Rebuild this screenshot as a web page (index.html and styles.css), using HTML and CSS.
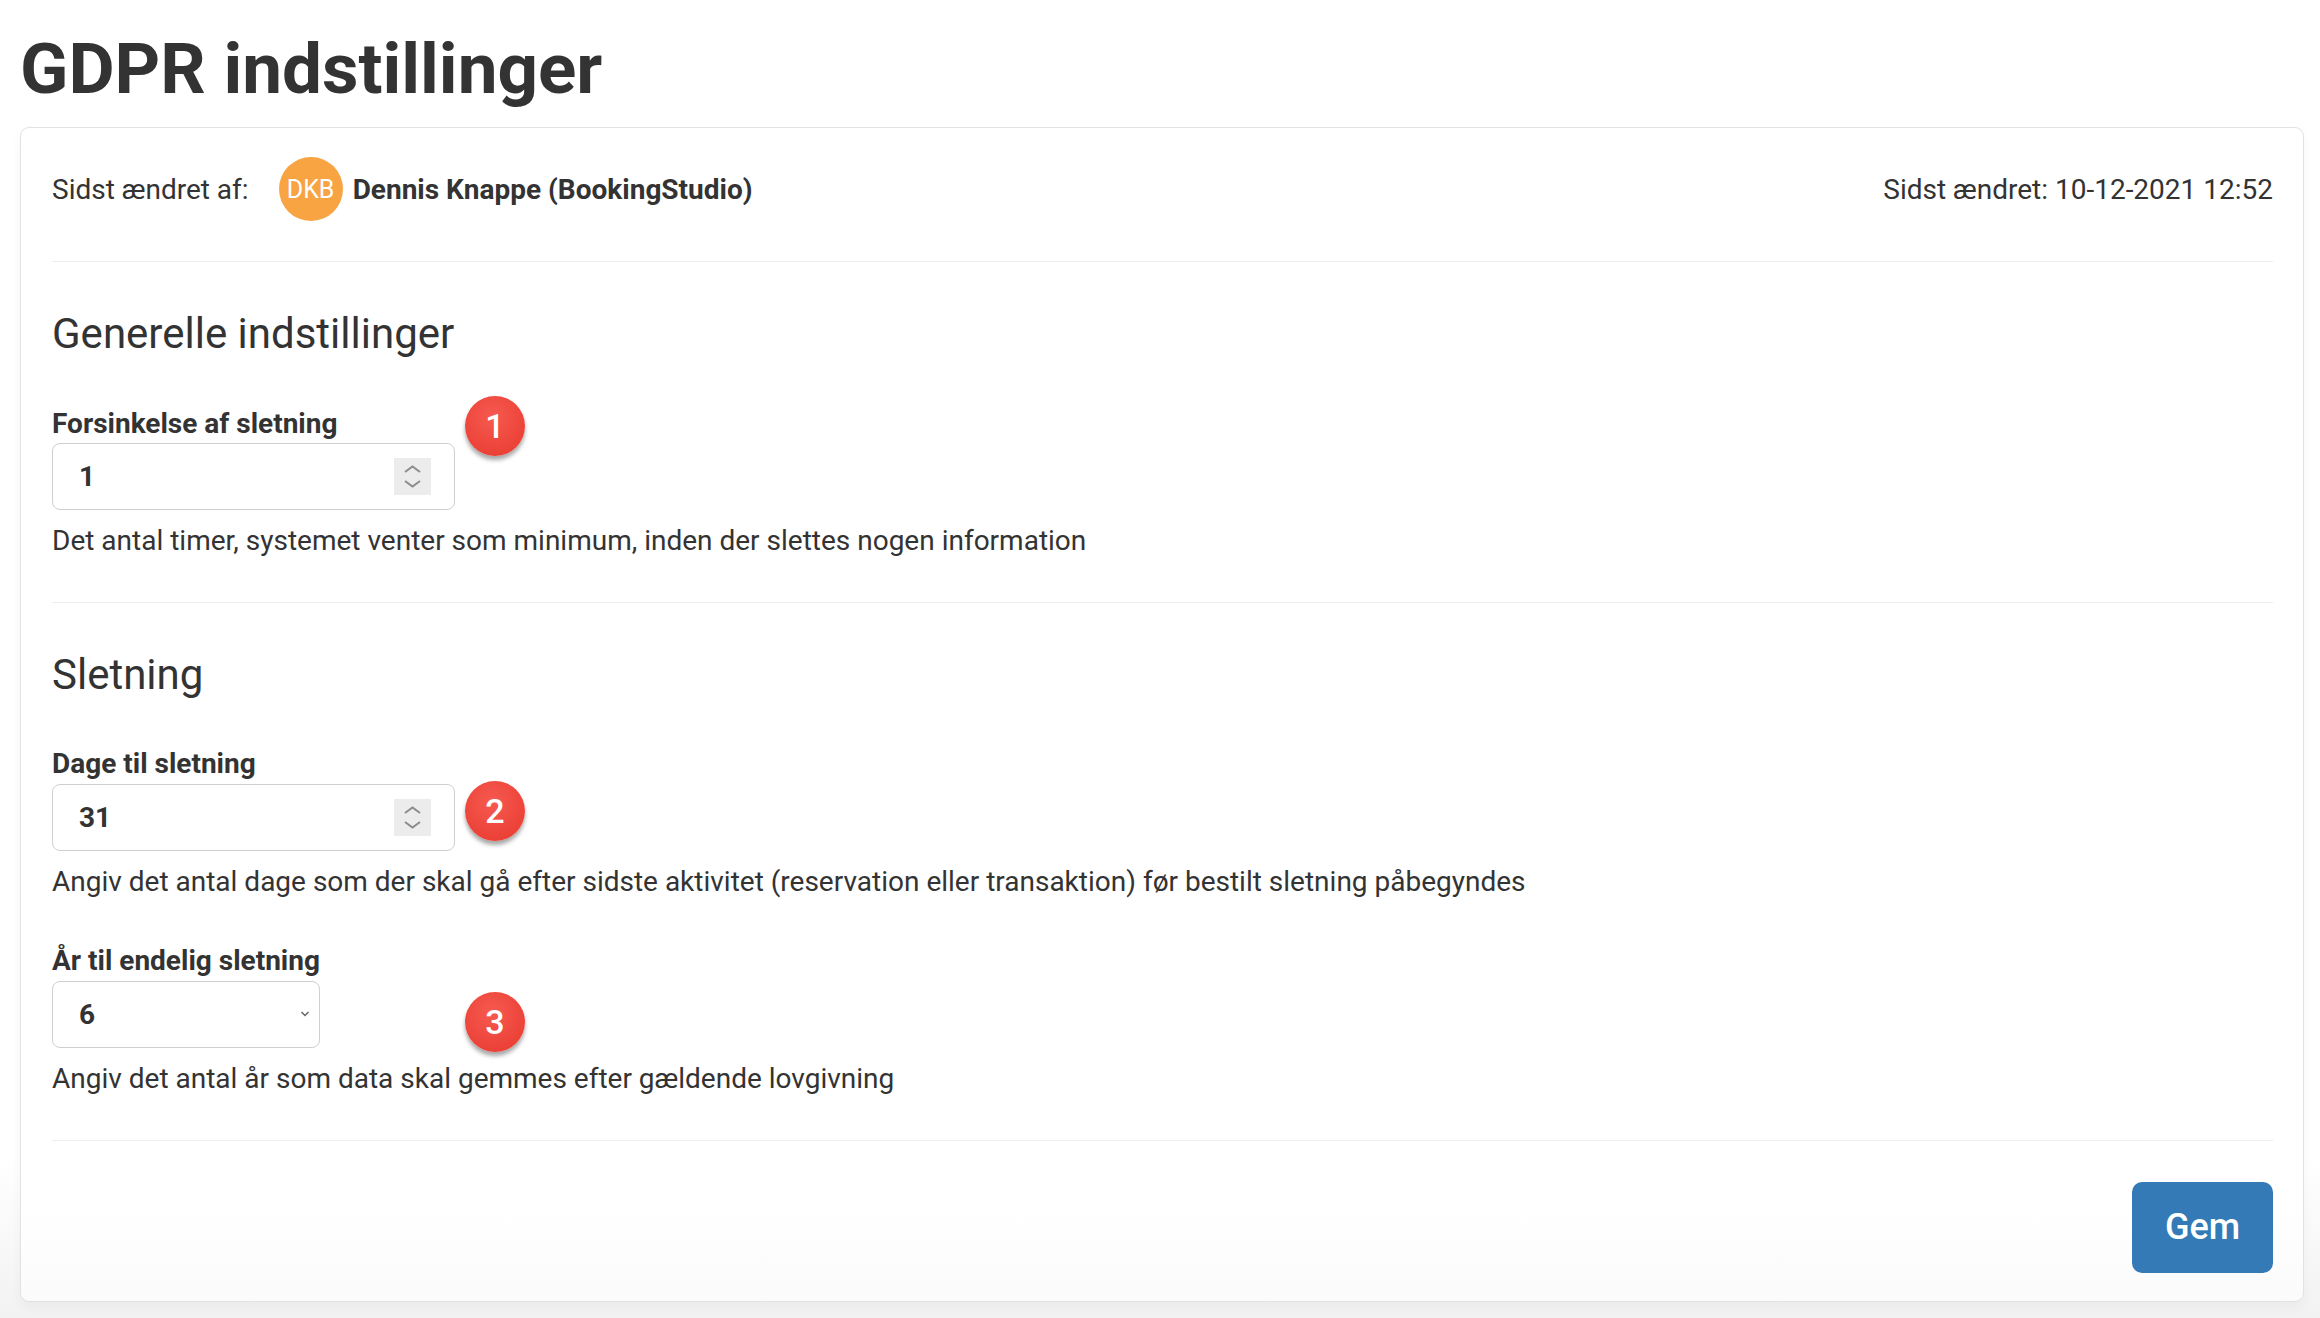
FILE: index.html
```
<!DOCTYPE html>
<html>
  <head>
    <meta charset="utf-8" />
    <title>GDPR indstillinger</title>
    <meta name="viewport" content="width=device-width, initial-scale=1.0" />
    <link rel="stylesheet" href="styles.css">
  </head>
  <body>
    <div class="page">
      <h1 class="pageTitle">GDPR indstillinger</h1>
      <div class="card">
        <div class="metaRow">
          <div class="metaLeft">
            <span class="metaLabel">Sidst ændret af:</span>
            <span class="avatar">DKB</span>
            <span class="userName">Dennis Knappe (BookingStudio)</span>
          </div>
          <div class="metaRight">Sidst ændret: 10-12-2021 12:52</div>
        </div>

        <div class="section">
          <h2 class="sectionTitle">Generelle indstillinger</h2>
          <div class="field">
            <label class="fieldLabel">Forsinkelse af sletning</label>
            <div class="inputRow">
              <div class="numberInput">
                <span class="inputValue">1</span>
                <svg class="spinner" width="37" height="37" viewBox="0 0 37 37">
                  <path d="M11 14 L18.5 8.5 L26 14" fill="none" stroke="#8c8c8c" stroke-width="2" />
                  <path d="M11 23 L18.5 28.5 L26 23" fill="none" stroke="#8c8c8c" stroke-width="2" />
                </svg>
              </div>
              <span class="badge badgeOne">1</span>
            </div>
            <p class="helpText">Det antal timer, systemet venter som minimum, inden der slettes nogen information</p>
          </div>
        </div>

        <div class="section">
          <h2 class="sectionTitle">Sletning</h2>
          <div class="field">
            <label class="fieldLabel">Dage til sletning</label>
            <div class="inputRow">
              <div class="numberInput">
                <span class="inputValue">31</span>
                <svg class="spinner" width="37" height="37" viewBox="0 0 37 37">
                  <path d="M11 14 L18.5 8.5 L26 14" fill="none" stroke="#8c8c8c" stroke-width="2" />
                  <path d="M11 23 L18.5 28.5 L26 23" fill="none" stroke="#8c8c8c" stroke-width="2" />
                </svg>
              </div>
              <span class="badge badgeTwo">2</span>
            </div>
            <p class="helpText">Angiv det antal dage som der skal gå efter sidste aktivitet (reservation eller transaktion) før bestilt sletning påbegyndes</p>
          </div>
          <div class="field fieldNext">
            <label class="fieldLabel">År til endelig sletning</label>
            <div class="inputRow">
              <div class="selectInput">
                <span class="inputValue">6</span>
                <svg width="10" height="8" viewBox="0 0 10 8">
                  <path d="M1.5 2 L5 5.5 L8.5 2" fill="none" stroke="#666" stroke-width="1.5" />
                </svg>
              </div>
              <span class="badge badgeThree">3</span>
            </div>
            <p class="helpText">Angiv det antal år som data skal gemmes efter gældende lovgivning</p>
          </div>
        </div>

        <div class="footerRow">
          <button type="submit" class="saveButton">Gem</button>
        </div>
      </div>
    </div>
  </body>
</html>
```

FILE: styles.css
```
html,
body {
  min-height: 100%;
}
body {
  margin: 0;
  min-height: 100vh;
  background: linear-gradient(#ffffff 0%, #ffffff 88%, #f2f2f2 100%);
  font-family: Roboto, "Liberation Sans", Arial, sans-serif;
  color: #333333;
}
.page {
  padding: 0 16px 14px 20px;
}
.pageTitle {
  margin: 0;
  padding-top: 26px;
  margin-bottom: 16px;
  font-size: 71px;
  line-height: 1.2;
  font-weight: 700;
  color: #333333;
}
.card {
  border: 1px solid #e2e2e2;
  border-radius: 9px;
  background: linear-gradient(#ffffff 0%, #ffffff 92%, #fbfbfb 100%);
  padding: 29px 30px 28px 31px;
  box-shadow: 0 6px 12px rgba(0, 0, 0, 0.04);
}
.metaRow {
  display: flex;
  justify-content: space-between;
  align-items: center;
  padding-bottom: 40px;
  border-bottom: 1px solid #ededed;
  font-size: 28px;
}
.metaLeft {
  display: flex;
  align-items: center;
}
.avatar {
  width: 64px;
  height: 64px;
  border-radius: 50%;
  background: #f8a443;
  color: #ffffff;
  font-size: 25px;
  display: flex;
  align-items: center;
  justify-content: center;
  margin-left: 30px;
  margin-right: 10px;
}
.userName {
  font-weight: 700;
}
.section {
  padding-top: 47px;
  padding-bottom: 44px;
  border-bottom: 1px solid #ededed;
}
.sectionTitle {
  margin: 0;
  font-size: 42px;
  line-height: 1.2;
  font-weight: 400;
}
.field {
  margin-top: 47px;
}
.fieldNext {
  margin-top: 46px;
}
.fieldLabel {
  display: block;
  font-size: 28px;
  line-height: 1.2;
  font-weight: 700;
  margin-bottom: 3px;
}
.inputRow {
  position: relative;
  display: flex;
}
.numberInput,
.selectInput {
  box-sizing: border-box;
  height: 67px;
  border: 1.5px solid #cfcfcf;
  border-radius: 8px;
  display: flex;
  align-items: center;
  justify-content: space-between;
  padding-left: 26px;
}
.numberInput {
  width: 403px;
  padding-right: 23px;
}
.selectInput {
  width: 268px;
  padding-right: 9px;
}
.inputValue {
  font-size: 28px;
  font-weight: 700;
}
.spinner {
  background: #ececec;
}
.badge {
  position: absolute;
  left: 413px;
  width: 60px;
  height: 60px;
  border-radius: 50%;
  background: radial-gradient(circle at 45% 35%, #f65a50 0%, #ec4238 70%, #e03a31 100%);
  box-shadow: 0 4px 4px rgba(0, 0, 0, 0.35);
  color: #ffffff;
  font-size: 34px;
  font-weight: 500;
  display: flex;
  align-items: center;
  justify-content: center;
}
.badgeOne {
  top: -47px;
}
.badgeTwo {
  top: -3px;
}
.badgeThree {
  top: 11px;
}
.helpText {
  margin: 14px 0 0 0;
  font-size: 28px;
  line-height: 1.2;
}
.footerRow {
  display: flex;
  justify-content: flex-end;
  padding-top: 41px;
}
.saveButton {
  width: 141px;
  height: 91px;
  border: none;
  border-radius: 10px;
  background: #337ab7;
  color: #ffffff;
  font-family: Roboto, "Liberation Sans", Arial, sans-serif;
  font-size: 36px;
  font-weight: 500;
  cursor: pointer;
}
```
